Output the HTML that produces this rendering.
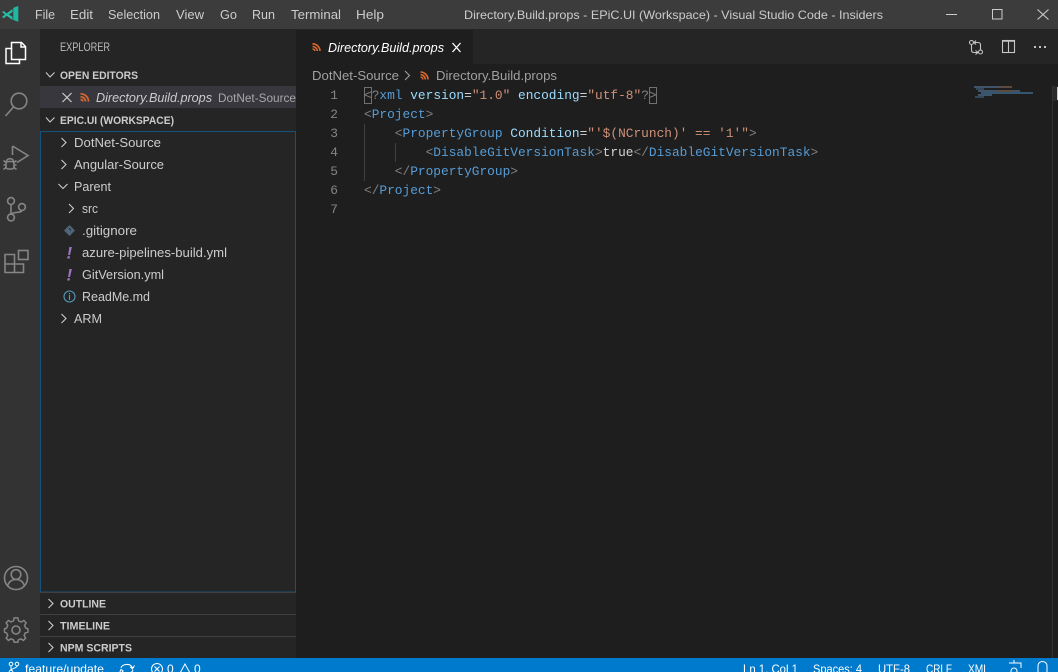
<!DOCTYPE html>
<html><head><meta charset="utf-8"><title>VS Code</title>
<style>
html,body{margin:0;padding:0;background:#1e1e1e;overflow:hidden}
svg{display:block;font-family:"Liberation Sans",sans-serif}
.m{font-family:"Liberation Mono",monospace;font-size:12.83px}
.b{font-weight:bold;font-size:11px;fill:#cccccc}
.f{font-size:13px;fill:#cccccc}
.s{font-size:12px;fill:#ffffff}
.g{fill:#808080}.n{fill:#569cd6}.a{fill:#9cdcfe}.v{fill:#ce9178}.d{fill:#d4d4d4}
.ln{fill:#858585;font-family:"Liberation Mono",monospace;font-size:12.83px;text-anchor:end}
</style></head><body>
<svg xmlns="http://www.w3.org/2000/svg" width="1058" height="672" viewBox="0 0 1058 672">
<rect width="1058" height="672" fill="#1e1e1e"/>
<!-- title bar -->
<rect width="1058" height="29" fill="#3c3c3c"/>
<path d="M13.300 7.800 18.300 6V21.800L13.300 20Z" fill="#1fb8a0"/>
<path d="M12.500 9 6.700 13.500 3.700 11 2 12 5 14.500 2 17 3.700 18.200 6.700 15.700 12.500 20V16.800L8.800 14.500 12.500 12Z" fill="#24bfa5"/>
<g font-size="13" fill="#cccccc">
<text x="35" y="19" textLength="20" lengthAdjust="spacingAndGlyphs">File</text>
<text x="70" y="19" textLength="23" lengthAdjust="spacingAndGlyphs">Edit</text>
<text x="108" y="19" textLength="52" lengthAdjust="spacingAndGlyphs">Selection</text>
<text x="176" y="19" textLength="28" lengthAdjust="spacingAndGlyphs">View</text>
<text x="220" y="19" textLength="17" lengthAdjust="spacingAndGlyphs">Go</text>
<text x="252" y="19" textLength="23" lengthAdjust="spacingAndGlyphs">Run</text>
<text x="291" y="19" textLength="50" lengthAdjust="spacingAndGlyphs">Terminal</text>
<text x="356" y="19" textLength="28" lengthAdjust="spacingAndGlyphs">Help</text>
<text x="464" y="19" font-size="12" textLength="419" lengthAdjust="spacingAndGlyphs">Directory.Build.props - EPiC.UI (Workspace) - Visual Studio Code - Insiders</text>
</g>
<path d="M946 14.500H957" stroke="#cccccc" fill="none"/>
<rect x="992.500" y="9.500" width="9.500" height="9.500" fill="none" stroke="#cccccc"/>
<path d="M1037.500 9.500 1048.500 19.500M1048.500 9.500 1037.500 19.500" stroke="#cccccc" stroke-width="1.100" fill="none"/>
<!-- activity bar -->
<rect x="0" y="29" width="40" height="629" fill="#333333"/>
<g fill="none" stroke="#ffffff" stroke-width="1.500">
<path d="M11.500 49V42.500H21.500L25.500 46.500V59.500H19.500"/>
<path d="M11.500 48.500H6V63.500H19.500V59.500H11.500Z"/>
<path d="M21 42.500V47H25.500"/>
</g>
<g fill="none" stroke="#858585" stroke-width="1.600">
<circle cx="19" cy="101" r="7.800"/>
<path d="M13.500 107 5.500 116"/>
<path d="M12.500 146 28 155.500 17 162.500M12.500 146V155"/>
<path d="M6.500 161.500C6.500 157.800 13.500 157.800 13.500 161.500"/>
<rect x="6" y="161.500" width="8" height="7.500" rx="2.500"/>
<path d="M3.500 160.500 6 162.500M3.500 169.500 6 167.500M16.500 160.500 14 162.500M16.500 169.500 14 167.500M3.500 165H6M14 165H16.500"/>
<circle cx="11" cy="201" r="3.400"/>
<circle cx="11" cy="217.500" r="3.400"/>
<circle cx="22" cy="207" r="3.400"/>
<path d="M11 204.500V214M22 210.500C21 213.500 14 211 11 214.500"/>
<rect x="18.500" y="250.500" width="9.500" height="9"/>
<path d="M5 254.500H14.500V264H23.500V272.500H5ZM5 264H14.500V272.500"/>
<circle cx="16" cy="578" r="11.500"/>
<circle cx="16" cy="574.500" r="4.800"/>
<path d="M7.500 586C9 581 12 579.500 16 579.500S23 581 24.500 586"/>
<path d="M14 619.500H18L18.800 622.800 21.700 624.100 24.500 622.300 27 624.900 25.300 627.700 26.500 630.500 29 631.500V635L26 636 24.800 638.700 26.500 641.500 24 644 21.300 642.300 18.500 643.500 18 646H14L13.300 643.500 10.500 642.300 7.800 644 5.300 641.500 7 638.700 5.800 636 3.500 635V631.500L6 630.500 7 627.700 5.300 624.900 7.800 622.300 10.500 624 13.300 622.800Z" transform="translate(0 -2.500) translate(16 630) scale(.92) translate(-16 -630)"/>
<circle cx="16" cy="630" r="4"/>
</g>
<!-- sidebar -->
<rect x="40" y="29" width="256" height="629" fill="#252526"/>
<text x="60" y="51" font-size="11.500" fill="#bbbbbb" textLength="50" lengthAdjust="spacingAndGlyphs">EXPLORER</text>
<path d="M46 72.500 50 77 54.500 72.500" fill="none" stroke="#cccccc" stroke-width="1.100"/>
<text x="60" y="79" class="b" textLength="78" lengthAdjust="spacingAndGlyphs">OPEN EDITORS</text>
<rect x="40" y="86" width="256" height="22" fill="#37373d"/>
<path d="M62.500 93 71.500 102M71.500 93 62.500 102" stroke="#cccccc" stroke-width="1.200" fill="none"/>
<g fill="none" stroke="#d9692e" stroke-width="1.700">
<path d="M80.500 93.800C85 93.800 88.500 97 88.500 101.500M80.500 96.800C83.500 96.800 85.500 99 85.500 101.500M80.500 99.500C81.800 99.500 82.800 100.300 82.800 101.500"/>
</g>
<text x="96" y="102" font-style="italic" class="f" textLength="116" lengthAdjust="spacingAndGlyphs">Directory.Build.props</text>
<text x="218" y="102" font-size="12" fill="#a8a8a8" textLength="78" lengthAdjust="spacingAndGlyphs">DotNet-Source</text>
<path d="M46 117.500 50 122 54.500 117.500" fill="none" stroke="#cccccc" stroke-width="1.100"/>
<text x="60" y="124" class="b" textLength="114" lengthAdjust="spacingAndGlyphs">EPIC.UI (WORKSPACE)</text>
<rect x="40.500" y="131.500" width="255" height="460.500" fill="none" stroke="#0e639c" stroke-opacity=".75"/>
<g fill="none" stroke="#cccccc" stroke-width="1.100">
<path d="M61.500 138 66 142.500 61.500 147"/>
<path d="M61.500 160 66 164.500 61.500 169"/>
<path d="M58.500 184 63 188.500 67.500 184"/>
<path d="M69 204 73.500 208.500 69 213"/>
<path d="M61.500 314 66 318.500 61.500 323"/>
</g>
<g class="f">
<text x="74" y="147" class="f" textLength="87" lengthAdjust="spacingAndGlyphs">DotNet-Source</text>
<text x="74" y="169" class="f" textLength="90" lengthAdjust="spacingAndGlyphs">Angular-Source</text>
<text x="74" y="191" class="f" textLength="37" lengthAdjust="spacingAndGlyphs">Parent</text>
<text x="82" y="213" class="f" textLength="16" lengthAdjust="spacingAndGlyphs">src</text>
<text x="82" y="235" class="f" textLength="55" lengthAdjust="spacingAndGlyphs">.gitignore</text>
<text x="82" y="257" class="f" textLength="145" lengthAdjust="spacingAndGlyphs">azure-pipelines-build.yml</text>
<text x="82" y="279" class="f" textLength="82" lengthAdjust="spacingAndGlyphs">GitVersion.yml</text>
<text x="82" y="301" class="f" textLength="68" lengthAdjust="spacingAndGlyphs">ReadMe.md</text>
<text x="74" y="323" class="f" textLength="28" lengthAdjust="spacingAndGlyphs">ARM</text>
</g>
<path d="M69.500 225 75 230.500 69.500 236 64 230.500Z" fill="#50657a"/>
<path d="M69 228 71 230.500" stroke="#252526" fill="none"/>
<text x="66.500" y="258.500" font-size="17" font-weight="bold" font-style="italic" fill="#a074c4">!</text>
<text x="66.500" y="280.500" font-size="17" font-weight="bold" font-style="italic" fill="#a074c4">!</text>
<circle cx="69.500" cy="296.500" r="5.500" fill="none" stroke="#519aba" stroke-width="1.100"/>
<path d="M69.500 295V300M69.500 293V294.200" stroke="#519aba" stroke-width="1.200" fill="none"/>
<rect x="40" y="592" width="256" height="1" fill="#3f3f46"/>
<rect x="40" y="614" width="256" height="1" fill="#3f3f46"/>
<rect x="40" y="636" width="256" height="1" fill="#3f3f46"/>
<g fill="none" stroke="#cccccc" stroke-width="1.100">
<path d="M48.500 599 53 603.500 48.500 608"/>
<path d="M48.500 621 53 625.500 48.500 630"/>
<path d="M48.500 643 53 647.500 48.500 652"/>
</g>
<text x="60" y="607.500" class="b" textLength="46" lengthAdjust="spacingAndGlyphs">OUTLINE</text>
<text x="60" y="629.500" class="b" textLength="50" lengthAdjust="spacingAndGlyphs">TIMELINE</text>
<text x="60" y="651.500" class="b" textLength="72" lengthAdjust="spacingAndGlyphs">NPM SCRIPTS</text>
<!-- tabs -->
<rect x="296" y="29" width="762" height="35" fill="#252526"/>
<rect x="296" y="30" width="177" height="34" fill="#1e1e1e"/>
<g fill="none" stroke="#d9692e" stroke-width="1.600">
<path d="M312.500 43.800C316.500 43.800 320 47 320 51M312.500 46.500C315 46.500 317.300 48.500 317.300 51M312.500 49C313.800 49 314.800 50 314.800 51"/>
</g>
<text x="328" y="52" font-style="italic" font-size="13" fill="#ffffff" textLength="116" lengthAdjust="spacingAndGlyphs">Directory.Build.props</text>
<path d="M452.500 43 460.500 52M460.500 43 452.500 52" stroke="#ffffff" stroke-width="1.300" fill="none"/>
<g fill="none" stroke="#c5c5c5" stroke-width="1.100">
<circle cx="971.500" cy="42.500" r="2"/>
<circle cx="980.500" cy="52" r="2"/>
<path d="M971.500 45V50C971.500 51.500 972.500 52.500 974 52.500H978M980.500 49.500V45C980.500 43 979.500 42.500 978 42.500H974.500M976 40.500 974 42.500 976 44.500M975.500 50.500 978 52.500 975.500 54.500"/>
<rect x="1002.500" y="40.500" width="12" height="12"/>
<path d="M1008.500 40.500V52.500"/>
<path d="M1002.500 41H1014.500" stroke-width="1.500"/>
</g>
<g fill="#c5c5c5"><rect x="1034" y="46" width="2" height="2"/><rect x="1039" y="46" width="2" height="2"/><rect x="1044" y="46" width="2" height="2"/></g>
<!-- breadcrumb -->
<text x="312" y="80" font-size="13" fill="#a0a0a0" textLength="87" lengthAdjust="spacingAndGlyphs">DotNet-Source</text>
<path d="M405 71 409.500 75.500 405 80" fill="none" stroke="#a0a0a0" stroke-width="1.100"/>
<g fill="none" stroke="#d9692e" stroke-width="1.600">
<path d="M420.500 72C424.500 72 428 75.500 428 79.500M420.500 74.500C423 74.500 425.300 77 425.300 79.500M420.500 77C421.800 77 422.800 78 422.800 79.500"/>
</g>
<text x="436" y="80" font-size="13" fill="#a0a0a0" textLength="121" lengthAdjust="spacingAndGlyphs">Directory.Build.props</text>
<!-- editor -->
<g>
<text class="ln" x="338" y="99">1</text>
<text class="ln" x="338" y="118">2</text>
<text class="ln" x="338" y="137">3</text>
<text class="ln" x="338" y="156">4</text>
<text class="ln" x="338" y="175">5</text>
<text class="ln" x="338" y="194">6</text>
<text class="ln" x="338" y="213">7</text>
</g>
<path d="M364.500 124V181M395.500 143V162" stroke="#404040" fill="none"/>
<rect x="364.500" y="87.500" width="7" height="16" fill="none" stroke="#707070"/>
<rect x="649.500" y="87.500" width="7" height="16" fill="none" stroke="#707070"/>
<g class="m" xml:space="preserve">
<text x="364" y="99" class="m"><tspan class="g">&lt;?</tspan><tspan class="n">xml</tspan><tspan class="d"> </tspan><tspan class="a">version</tspan><tspan class="d">=</tspan><tspan class="v">"1.0"</tspan><tspan class="d"> </tspan><tspan class="a">encoding</tspan><tspan class="d">=</tspan><tspan class="v">"utf-8"</tspan><tspan class="g">?&gt;</tspan></text>
<text x="364" y="118" class="m"><tspan class="g">&lt;</tspan><tspan class="n">Project</tspan><tspan class="g">&gt;</tspan></text>
<text x="394.800" y="137" class="m"><tspan class="g">&lt;</tspan><tspan class="n">PropertyGroup</tspan><tspan class="d"> </tspan><tspan class="a">Condition</tspan><tspan class="d">=</tspan><tspan class="v">"'$(NCrunch)' == '1'"</tspan><tspan class="g">&gt;</tspan></text>
<text x="425.600" y="156" class="m"><tspan class="g">&lt;</tspan><tspan class="n">DisableGitVersionTask</tspan><tspan class="g">&gt;</tspan><tspan class="d">true</tspan><tspan class="g">&lt;/</tspan><tspan class="n">DisableGitVersionTask</tspan><tspan class="g">&gt;</tspan></text>
<text x="394.800" y="175" class="m"><tspan class="g">&lt;/</tspan><tspan class="n">PropertyGroup</tspan><tspan class="g">&gt;</tspan></text>
<text x="364" y="194" class="m"><tspan class="g">&lt;/</tspan><tspan class="n">Project</tspan><tspan class="g">&gt;</tspan></text>
</g>
<!-- minimap -->
<g>
<rect x="974" y="86" width="26" height="2" fill="#3f5468"/><rect x="1000" y="86" width="12" height="2" fill="#5a4a40"/>
<rect x="976" y="88" width="8" height="2" fill="#33475a"/>
<rect x="978" y="90" width="20" height="2" fill="#3f5468"/><rect x="998" y="90" width="16" height="2" fill="#5a4a40"/><rect x="1014" y="90" width="6" height="2" fill="#3f5468"/>
<rect x="981" y="92" width="52" height="2" fill="#35566f"/>
<rect x="978" y="94" width="14" height="2" fill="#3f5468"/>
<rect x="975" y="96" width="9" height="2" fill="#33475a"/>
</g>
<rect x="1052" y="86" width="1" height="572" fill="#333333"/>
<rect x="1053" y="86" width="4" height="15" fill="#2a2a2a"/>
<rect x="1057" y="87" width="1" height="13" fill="#c8c8c8"/>
<!-- status -->
<rect x="0" y="658" width="1058" height="14" fill="#007acc"/>
<g fill="none" stroke="#ffffff" stroke-width="1">
<circle cx="11" cy="664" r="1.800"/><circle cx="17" cy="664" r="1.800"/><circle cx="11" cy="672" r="1.800"/>
<path d="M11 666V670M17 666C17 668 13 668 11 670"/>
<path d="M121 668C122 664 130 663 132 667M133 669.500 131 667.500H134M133 670C132 674 124 674 122 671"/>
<path d="M130.500 666.500 133 668 134.500 665.500M123.500 671 121 669.500 119.800 672"/>
<circle cx="157" cy="669" r="5.500"/>
<path d="M154.500 666.500 159.500 671.500M159.500 666.500 154.500 671.500"/>
<path d="M185 664 179.500 674H190.500Z"/>
<path d="M1009 663H1021V668M1014 663V660"/>
<circle cx="1014" cy="671" r="3"/>
<path d="M1038 676V666C1038 660 1047 660 1047 666V676"/>
</g>
<g class="s">
<text x="25" y="673" class="s" textLength="79" lengthAdjust="spacingAndGlyphs">feature/update</text>
<text x="167" y="673" class="s">0</text>
<text x="194" y="673" class="s">0</text>
<text x="743" y="673" class="s" textLength="55" lengthAdjust="spacingAndGlyphs">Ln 1, Col 1</text>
<text x="813" y="673" class="s" textLength="49" lengthAdjust="spacingAndGlyphs">Spaces: 4</text>
<text x="878" y="673" class="s" textLength="32" lengthAdjust="spacingAndGlyphs">UTF-8</text>
<text x="926" y="673" class="s" textLength="26" lengthAdjust="spacingAndGlyphs">CRLF</text>
<text x="968" y="673" class="s" textLength="21" lengthAdjust="spacingAndGlyphs">XML</text>
</g>
</svg>
</body></html>
